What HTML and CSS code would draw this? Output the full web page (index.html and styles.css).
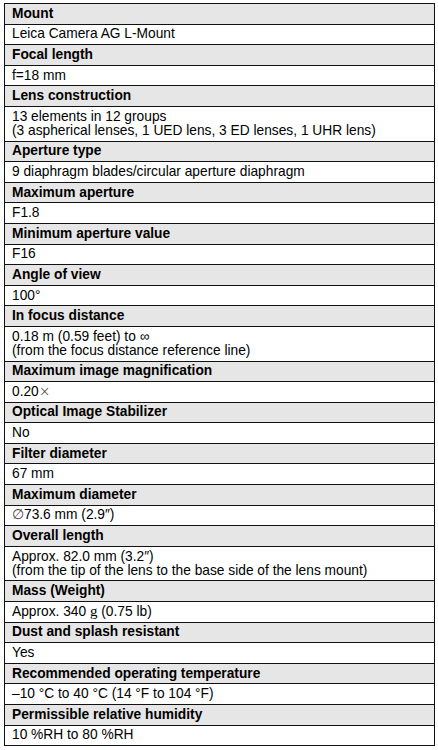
FILE: index.html
```html
<!DOCTYPE html>
<html>
<head>
<meta charset="utf-8">
<link rel="stylesheet" href="styles.css">
</head>
<body>
<div class="spec">
  <div class="h">Mount</div>
  <div class="v">Leica Camera AG L-Mount</div>
  <div class="h">Focal length</div>
  <div class="v">f=18 mm</div>
  <div class="h">Lens construction</div>
  <div class="v">13 elements in 12 groups<br>(3 aspherical lenses, 1 UED lens, 3 ED lenses, 1 UHR lens)</div>
  <div class="h">Aperture type</div>
  <div class="v">9 diaphragm blades/circular aperture diaphragm</div>
  <div class="h">Maximum aperture</div>
  <div class="v">F1.8</div>
  <div class="h">Minimum aperture value</div>
  <div class="v">F16</div>
  <div class="h">Angle of view</div>
  <div class="v">100°</div>
  <div class="h">In focus distance</div>
  <div class="v">0.18 m (0.59 feet) to ∞<br>(from the focus distance reference line)</div>
  <div class="h">Maximum image magnification</div>
  <div class="v">0.20<span class="times">×</span></div>
  <div class="h">Optical Image Stabilizer</div>
  <div class="v">No</div>
  <div class="h">Filter diameter</div>
  <div class="v">67 mm</div>
  <div class="h">Maximum diameter</div>
  <div class="v"><span class="dia">∅</span>73.6 mm (2.9″)</div>
  <div class="h">Overall length</div>
  <div class="v">Approx. 82.0 mm (3.2″)<br>(from the tip of the lens to the base side of the lens mount)</div>
  <div class="h">Mass (Weight)</div>
  <div class="v">Approx. 340 <span class="serif">g</span> (0.75 lb)</div>
  <div class="h">Dust and splash resistant</div>
  <div class="v">Yes</div>
  <div class="h">Recommended operating temperature</div>
  <div class="v">–10 °C to 40 °C (14 °F to 104 °F)</div>
  <div class="h">Permissible relative humidity</div>
  <div class="v">10 %RH to 80 %RH</div>
</div>
</body>
</html>
```
FILE: styles.css
```css
html, body {
  margin: 0;
  padding: 0;
  background: #ffffff;
}
body {
  font-family: "Liberation Sans", Arial, sans-serif;
  font-size: 13.75px;
  color: #000;
}
.spec {
  margin: 3px 0 0 4px;
  width: 429px;
  border: 1px solid #111;
  display: flex;
  flex-direction: column;
}
.h, .v {
  height: 14px;
  line-height: 14px;
  padding: 2.8px 7px 2.8px 7px;
  border-bottom: 1px solid #111;
  overflow: hidden;
}
.v:has(br) {
  height: 28px;
}
.spec > div:last-child {
  border-bottom: none;
}
.h {
  background: #e6e6e6;
  font-weight: bold;
}
.v {
  background: #ffffff;
}
.serif {
  font-family: "Liberation Serif", "Times New Roman", serif;
  font-size: 15px;
  line-height: 0;
}
.times {
  font-family: "DejaVu Sans", sans-serif;
  font-weight: 200;
  font-size: 14px;
  line-height: 0;
  color: #333;
}
.dia {
  color: #444;
}
```
